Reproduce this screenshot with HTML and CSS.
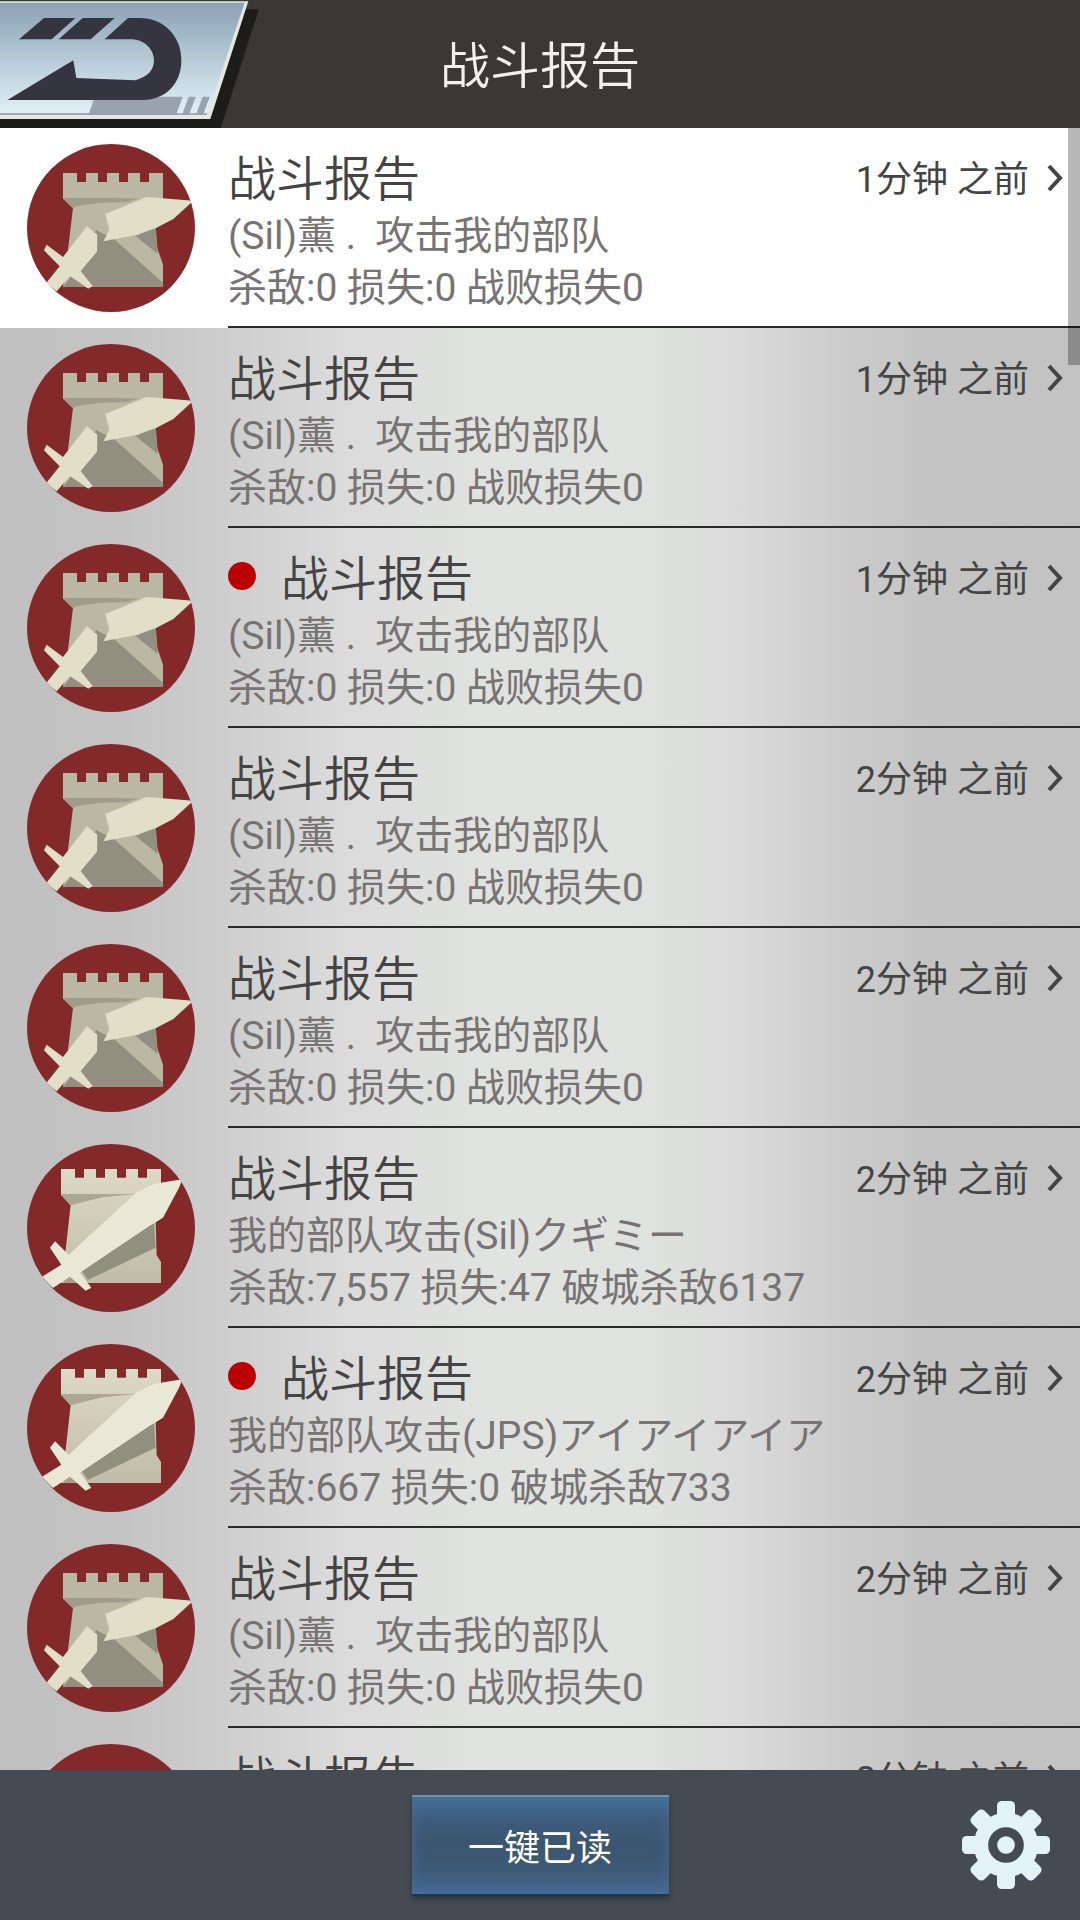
FILE: index.html
```html
<!DOCTYPE html>
<html lang="zh-CN">
<head>
    <meta charset="UTF-8">
    <meta name="viewport" content="width=device-width, initial-scale=1.0">
    <title>战斗报告</title>
    <link rel="stylesheet" href="styles.css">
</head>
<body>
    <!-- Shared icons -->
    <svg class="sprite" aria-hidden="true">
        <defs>
            <clipPath id="round"><circle cx="303" cy="294" r="252"/></clipPath>
            <linearGradient id="stone" x1="0" y1="0" x2="0" y2="1">
                <stop offset="0" stop-color="#dcdac6"/>
                <stop offset="1" stop-color="#bfbda8"/>
            </linearGradient>
        </defs>
        <symbol id="defend" viewBox="51 42 504 504">
            <circle cx="303" cy="294" r="252" fill="#842929"/>
            <path fill="#bab8a2" d="M159 129h42v27h27v-27h36v27h27v-27h36v27h27v-27h36v27h27v-27h42v75l-22 90 5 60 17 50v66H159l15-110 15-127-30-27z"/>
            <path fill="#9f9d8a" d="M159 203h155l72 3-40 11q-100 0-160 16z"/>
            <path fill="#919080" d="M258 300l55 28 146 130v12H160l30-40z"/>
            <path fill="#919080" d="M377 318l60-26 6 80z"/>
            <g clip-path="url(#round)" fill="#e1dfc8">
                <path d="M286 252l124-51 140 11-60 55-52 27-60 21-98 19 18-34z"/>
                <path d="M231 289l31 25-1 51-49 58 36 45-13 8-55-38-40 46-32-24 41-51-47-48 8-17 49 37z"/>
            </g>
        </symbol>
        <symbol id="attack" viewBox="51 42 504 504">
            <circle cx="303" cy="294" r="252" fill="#842929"/>
            <path fill="url(#stone)" d="M153 117h42v26h27v-26h36v26h27v-26h36v26h27v-26h36v26h27v-26h42v75l-18 26 5 158 13 20v63H153l15-108 14-127-29-29z"/>
            <path fill="#aaa895" d="M153 192h225l-100 10-98 24z"/>
            <path fill="#918f7e" d="M432 272l5 81-204 97-20-30z"/>
            <path fill="#a19f8c" d="M160 458l20-28 40 28z"/>
            <g clip-path="url(#round)" fill="#e9e7d5">
                <path d="M517 148l-10 25-48 90-42 26-207 139 34 45-17 9-47-42-51 34-34-33 59-37-34-51 15-19 41 40 204-187 54-26z"/>
            </g>
        </symbol>
        <symbol id="chevron" viewBox="0 0 16 28">
            <path d="M2 2l11 12-11 12" fill="none" stroke="currentColor" stroke-width="4"/>
        </symbol>
    </svg>

    <header class="topbar">
        <button class="back" type="button" aria-label="返回">
            <svg viewBox="0 0 810 384">
                <defs>
                    <linearGradient id="sky" x1="0" y1="0" x2="0" y2="1">
                        <stop offset="0" stop-color="#8ba2b5"/>
                        <stop offset="1" stop-color="#e1f1f6"/>
                    </linearGradient>
                </defs>
                <path fill="#1c1c19" d="M0 340h630L735 28h42L662 384H0z"/>
                <path fill="#e3e9df" d="M0 4h745L631 357H0z"/>
                <path fill="url(#sky)" d="M0 8h734L622 343H0z"/>
                <path fill="#a3abb1" d="M0 339h622l-2 6H0z"/>
                <path fill="#98a3ae" d="M284 290h264l-20 55H265zM566 290h21l-20 55h-21zM608 290h21l-20 55h-21z"/>
                <path fill="#343540" d="M132 54h94l-71 64H57zM248 54h96l-72 64h-96zM384 54h34c75 0 126 55 126 127s-48 119-116 119H22l198-119 9 53 177 7c37-10 56-31 56-60 0-33-29-61-64-63h-84z"/>
            </svg>
        </button>
        <h1>战斗报告</h1>
    </header>

    <main class="list">
        <a class="row active" href="#">
            <svg class="badge"><use href="#defend"/></svg>
            <div class="info">
                <div class="head"><h2>战斗报告</h2><time>1分钟 之前</time><svg class="chevron"><use href="#chevron"/></svg></div>
                <p>(Sil)薰 .&nbsp; 攻击我的部队</p>
                <p>杀敌:0 损失:0 战败损失0</p>
            </div>
        </a>
        <a class="row" href="#">
            <svg class="badge"><use href="#defend"/></svg>
            <div class="info">
                <div class="head"><h2>战斗报告</h2><time>1分钟 之前</time><svg class="chevron"><use href="#chevron"/></svg></div>
                <p>(Sil)薰 .&nbsp; 攻击我的部队</p>
                <p>杀敌:0 损失:0 战败损失0</p>
            </div>
        </a>
        <a class="row unread" href="#">
            <svg class="badge"><use href="#defend"/></svg>
            <div class="info">
                <div class="head"><h2>战斗报告</h2><time>1分钟 之前</time><svg class="chevron"><use href="#chevron"/></svg></div>
                <p>(Sil)薰 .&nbsp; 攻击我的部队</p>
                <p>杀敌:0 损失:0 战败损失0</p>
            </div>
        </a>
        <a class="row" href="#">
            <svg class="badge"><use href="#defend"/></svg>
            <div class="info">
                <div class="head"><h2>战斗报告</h2><time>2分钟 之前</time><svg class="chevron"><use href="#chevron"/></svg></div>
                <p>(Sil)薰 .&nbsp; 攻击我的部队</p>
                <p>杀敌:0 损失:0 战败损失0</p>
            </div>
        </a>
        <a class="row" href="#">
            <svg class="badge"><use href="#defend"/></svg>
            <div class="info">
                <div class="head"><h2>战斗报告</h2><time>2分钟 之前</time><svg class="chevron"><use href="#chevron"/></svg></div>
                <p>(Sil)薰 .&nbsp; 攻击我的部队</p>
                <p>杀敌:0 损失:0 战败损失0</p>
            </div>
        </a>
        <a class="row" href="#">
            <svg class="badge"><use href="#attack"/></svg>
            <div class="info">
                <div class="head"><h2>战斗报告</h2><time>2分钟 之前</time><svg class="chevron"><use href="#chevron"/></svg></div>
                <p>我的部队攻击(Sil)クギミー</p>
                <p>杀敌:7,557 损失:47 破城杀敌6137</p>
            </div>
        </a>
        <a class="row unread" href="#">
            <svg class="badge"><use href="#attack"/></svg>
            <div class="info">
                <div class="head"><h2>战斗报告</h2><time>2分钟 之前</time><svg class="chevron"><use href="#chevron"/></svg></div>
                <p>我的部队攻击(JPS)アイアイアイア</p>
                <p>杀敌:667 损失:0 破城杀敌733</p>
            </div>
        </a>
        <a class="row" href="#">
            <svg class="badge"><use href="#defend"/></svg>
            <div class="info">
                <div class="head"><h2>战斗报告</h2><time>2分钟 之前</time><svg class="chevron"><use href="#chevron"/></svg></div>
                <p>(Sil)薰 .&nbsp; 攻击我的部队</p>
                <p>杀敌:0 损失:0 战败损失0</p>
            </div>
        </a>
        <a class="row" href="#">
            <svg class="badge"><use href="#defend"/></svg>
            <div class="info">
                <div class="head"><h2>战斗报告</h2><time>2分钟 之前</time><svg class="chevron"><use href="#chevron"/></svg></div>
            </div>
        </a>
        <div class="scrollbar"></div>
    </main>

    <footer class="bottombar">
        <button class="read-all" type="button">一键已读</button>
        <button class="settings" type="button" aria-label="设置">
            <svg viewBox="96 63 264 264">
                <g fill="#e3f2f9">
                    <circle cx="228" cy="195" r="97"/>
                    <g id="teeth">
                        <rect x="201" y="63" width="54" height="264" rx="14"/>
                        <rect x="96" y="168" width="264" height="54" rx="14"/>
                    </g>
                    <use href="#teeth" transform="rotate(45 228 195)"/>
                </g>
                <circle cx="228" cy="195" r="40" fill="none" stroke="#444b52" stroke-width="27"/>
            </svg>
        </button>
    </footer>
</body>
</html>
```
FILE: styles.css
```css
* {
    box-sizing: border-box;
}
body {
    margin: 0;
    height: 100vh;
    display: flex;
    flex-direction: column;
    font-family: Roboto, "Noto Sans CJK SC", sans-serif;
    color: #444;
}
h1, h2, p {
    margin: 0;
}
h1, h2 {
    font-weight: 350;
}
button {
    padding: 0;
    border: none;
    background: none;
    font-family: inherit;
    cursor: pointer;
}
svg {
    display: block;
}
.sprite {
    position: absolute;
    width: 0;
    height: 0;
}

/* Top bar */
.topbar {
    flex: none;
    display: grid;
    grid-template-columns: 1fr auto 1fr;
    align-items: center;
    height: 128px;
    background: #393836;
    color: #f0f0f0;
}
.topbar h1 {
    padding-top: 6px;
    font-size: 50px;
    line-height: 60px;
}
.back svg {
    width: 270px;
    height: 128px;
}

/* Report list */
.list {
    position: relative;
    flex: 1;
    min-height: 0;
    overflow: hidden;
    background: linear-gradient(to right, #c0c0c0, #c3c3c3 10%, #cdcdcd 20%, #dadbda 32%, #e1e3e1 46%, #e0e2e0 60%, #d9dad9 69%, #cccccc 78%, #c4c4c4 86%, #c2c2c2);
}
.row {
    display: flex;
    align-items: center;
    gap: 33px;
    height: 200px;
    padding-left: 27px;
    color: inherit;
    text-decoration: none;
}
.row.active {
    background: #fff;
}
.badge {
    flex: none;
    width: 168px;
    height: 168px;
}
.info {
    flex: 1;
    height: 200px;
    padding: 22px 17px 0 0;
    border-bottom: 2px solid #2a2a2a;
}
.head {
    display: flex;
    align-items: center;
    height: 60px;
}
.head h2 {
    flex: 1;
    font-size: 48px;
    line-height: 60px;
}
.unread h2::before {
    content: "";
    display: inline-block;
    width: 28px;
    height: 28px;
    margin-right: 25px;
    border-radius: 50%;
    background: #bb0000;
    vertical-align: 6px;
}
.head time {
    font-size: 36px;
    line-height: 60px;
}
.chevron {
    width: 16px;
    height: 28px;
    margin: 0 0 4px 18px;
}
.info p {
    font-size: 39px;
    line-height: 52px;
    color: #777372;
    white-space: nowrap;
}
.scrollbar {
    position: absolute;
    top: 0;
    right: 0;
    width: 12px;
    height: 237px;
    background: rgba(0, 0, 0, 0.28);
}

/* Bottom bar */
.bottombar {
    flex: none;
    display: grid;
    grid-template-columns: 1fr auto 1fr;
    align-items: center;
    height: 150px;
    padding: 0 30px;
    background: #444b52;
}
.read-all {
    grid-column: 2;
    width: 257px;
    height: 101px;
    border-top: 2px solid #6d91b0;
    border-bottom: 2px solid #1b3650;
    background: linear-gradient(#44709a, #3c5b7b 25%, #3b566f 50%, #3d5a77 75%, #456a8f);
    box-shadow: inset 0 0 14px #456f98, 0 3px 5px rgba(0, 0, 0, 0.3);
    color: #fff;
    font-size: 36px;
}
.settings {
    justify-self: end;
}
.settings svg {
    width: 88px;
    height: 88px;
}
```
